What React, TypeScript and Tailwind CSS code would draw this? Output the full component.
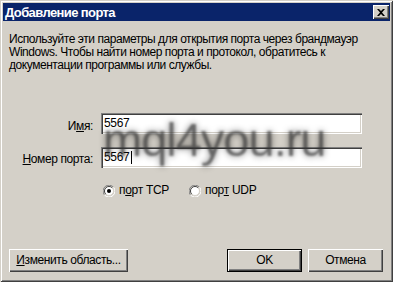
import React from "react";

const font = { fontFamily: '"Liberation Sans", Arial, sans-serif' };

function Raised({ children, className = "" }: { children: React.ReactNode; className?: string }) {
  return (
    <div
      className={
        "flex items-center justify-center bg-[#d4d0c8] text-[12px] leading-[13px] tracking-[-0.4px] text-black shadow-[inset_1px_1px_0_#ffffff,inset_-1px_-1px_0_#404040,inset_-2px_-2px_0_#808080] " +
        className
      }
    >
      {children}
    </div>
  );
}

function Radio({ checked }: { checked?: boolean }) {
  return (
    <svg width="12" height="12" viewBox="0 0 12 12" className="shrink-0">
      <path d="M10.5 2.2 A5.5 5.5 0 0 0 1.5 10" stroke="#808080" strokeWidth="1" fill="none" />
      <path d="M1.5 10 A5.5 5.5 0 0 0 10.5 2.2" stroke="#ffffff" strokeWidth="1" fill="none" />
      <circle cx="6" cy="6" r="4.5" fill="#ffffff" />
      <path d="M9.2 2.8 A4.5 4.5 0 0 0 2.8 9.2" stroke="#404040" strokeWidth="1" fill="none" />
      <path d="M2.8 9.2 A4.5 4.5 0 0 0 9.2 2.8" stroke="#d4d0c8" strokeWidth="1" fill="none" />
      {checked && <circle cx="6" cy="6" r="2" fill="#000" />}
    </svg>
  );
}

function Edit({ value, caret }: { value: string; caret?: boolean }) {
  return (
    <div className="w-[261px] h-[21px] bg-white flex items-center pl-[3px] text-[12px] leading-[13px] tracking-[-0.3px] text-black shadow-[inset_1px_1px_0_#808080,inset_2px_2px_0_#404040,inset_-1px_-1px_0_#ffffff,inset_-2px_-2px_0_#d4d0c8]">
      <span>{value}</span>
      {caret && <span className="inline-block w-px h-[13px] bg-black ml-px" />}
    </div>
  );
}

export default function App() {
  return (
    <div
      style={font}
      className="relative w-[393px] h-[282px] bg-[#d4d0c8] p-[3px] flex flex-col overflow-hidden shadow-[inset_1px_1px_0_#d4d0c8,inset_-1px_-1px_0_#404040,inset_2px_2px_0_#ffffff,inset_-2px_-2px_0_#808080]"
    >
      {/* Title bar */}
      <div className="h-[18px] shrink-0 bg-[#0a246a] flex items-center justify-between pl-[2px] pr-[1px]">
        <span className="text-white font-bold text-[13px] leading-none tracking-[-0.6px]">Добавление порта</span>
        <div className="w-[16px] h-[14px] bg-[#d4d0c8] flex items-center justify-center shadow-[inset_1px_1px_0_#ffffff,inset_-1px_-1px_0_#404040,inset_-2px_-2px_0_#808080]">
          <svg width="8" height="7" viewBox="0 0 8 7">
            <path d="M0 0 L2 0 L4 2 L6 0 L8 0 L5 3.5 L8 7 L6 7 L4 5 L2 7 L0 7 L3 3.5 Z" fill="#000" />
          </svg>
        </div>
      </div>

      {/* Description */}
      <p className="mt-[12px] pl-[6px] text-[12px] leading-[13px] tracking-[-0.45px] text-black whitespace-nowrap">
        Используйте эти параметры для открытия порта через брандмауэр
        <br />
        Windows. Чтобы найти номер порта и протокол, обратитесь к
        <br />
        документации программы или службы.
      </p>

      {/* Form */}
      <div className="mt-[41px] flex flex-col gap-[13px] text-[12px] leading-[13px] tracking-[-0.4px]">
        <div className="flex items-start h-[21px]">
          <div className="w-[90px] text-right mt-[7px]">
            И<span className="underline">м</span>я:
          </div>
          <div className="ml-[8px]">
            <Edit value="5567" />
          </div>
        </div>
        <div className="flex items-start h-[21px]">
          <div className="w-[90px] text-right mt-[6px]">
            <span className="underline">Н</span>омер порта:
          </div>
          <div className="ml-[8px]">
            <Edit value="5567" caret />
          </div>
        </div>
      </div>

      <div className="mt-[16px] pl-[100px] flex items-center h-[13px] text-[12px] leading-[13px] tracking-[-0.3px]">
        <div className="flex items-center gap-[4px] w-[86px]">
          <Radio checked />
          <span>
            п<span className="underline">о</span>рт TCP
          </span>
        </div>
        <div className="flex items-center gap-[4px]">
          <Radio />
          <span>
            пор<span className="underline">т</span> UDP
          </span>
        </div>
      </div>

      {/* Buttons */}
      <div className="mt-auto mb-[7px] flex items-center pl-[6px] pr-[7px]">
        <Raised className="w-[119px] h-[23px]">
          <span>
            <span className="underline">И</span>зменить область...
          </span>
        </Raised>
        <div className="flex-1" />
        <div className="border border-black">
          <Raised className="w-[73px] h-[21px]">OK</Raised>
        </div>
        <Raised className="w-[75px] h-[23px] ml-[6px]">Отмена</Raised>
      </div>

      {/* Watermark */}
      <div className="pointer-events-none absolute left-[103px] top-[116px] text-[47px] leading-none tracking-[-1px] text-[rgba(55,55,55,0.62)] [text-shadow:0_0_6px_rgba(0,0,0,0.5)] blur-[1px]">
        mql4you.ru
      </div>
    </div>
  );
}
